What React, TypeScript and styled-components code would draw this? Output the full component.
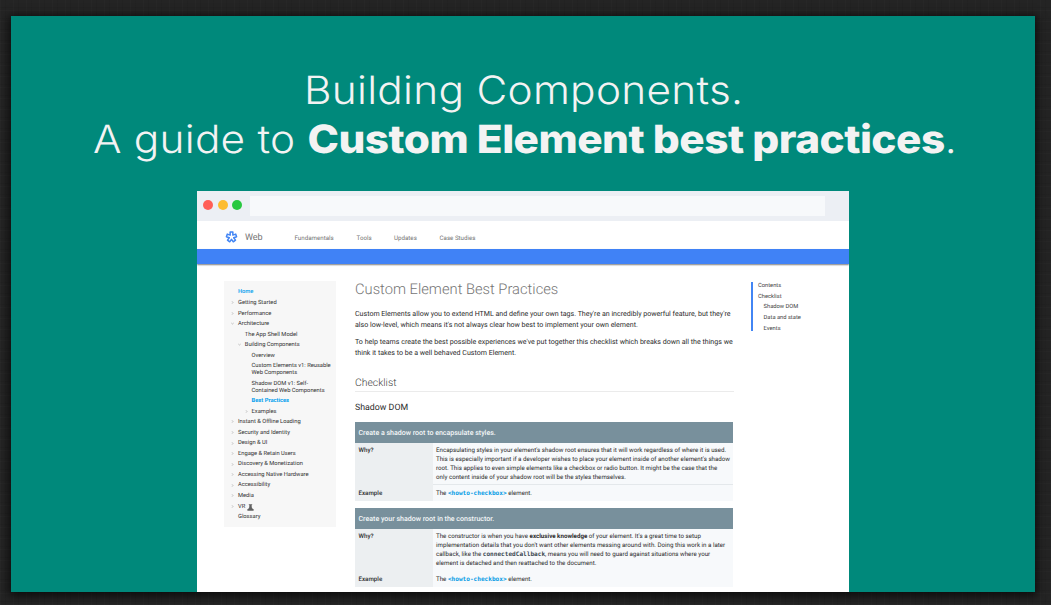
import React from 'react';
import styled, { createGlobalStyle } from 'styled-components';

const GlobalStyle = createGlobalStyle`
  * { box-sizing: border-box; }
  html, body { margin: 0; padding: 0; }
  body {
    width: 1051px;
    height: 605px;
    overflow: hidden;
    font-family: Roboto, "Liberation Sans", sans-serif;
    text-rendering: geometricPrecision;
    background: #222;
  }
`;

const Stage = styled.div`
  width: 1051px;
  height: 605px;
  padding: 16px 16px 13px 11px;
  overflow: hidden;
  background-color: #242424;
  background-image:
    repeating-linear-gradient(90deg, rgba(255, 255, 255, 0.015) 0 1px, transparent 1px 5px, rgba(0, 0, 0, 0.05) 5px 6px, transparent 6px 13px),
    repeating-linear-gradient(0deg, rgba(255, 255, 255, 0.015) 0 1px, transparent 1px 3px, rgba(0, 0, 0, 0.05) 3px 4px, transparent 4px 11px);
`;

const Slide = styled.main`
  width: 1024px;
  height: 576px;
  display: flex;
  flex-direction: column;
  overflow: hidden;
  background: #00897b;
  box-shadow: 0 2px 9px 2px rgba(0, 0, 0, 0.7);
`;

const Headline = styled.h1`
  margin: 0;
  height: 175px;
  flex: none;
  padding-top: 50px;
  display: flex;
  flex-direction: column;
  color: #f3f3f3;
  font-family: Inter, "Open Sans", sans-serif;
  font-size: 39px;
  font-weight: 275;
  line-height: 49px;
  white-space: pre;
`;

const HeadlineRow = styled.span<{ $left: number; $track: number }>`
  align-self: flex-start;
  margin-left: ${(p) => p.$left}px;
  letter-spacing: ${(p) => p.$track}px;
  transform: scaleX(1.085);
  transform-origin: left center;
`;

const Strong = styled.strong<{ $track: number }>`
  font-weight: 800;
  letter-spacing: ${(p) => p.$track}px;
`;

const Browser = styled.section`
  width: 652px;
  margin-left: 186px;
  flex: none;
  height: 401px;
  background: #fff;
  overflow: hidden;
`;

const Chrome = styled.div`
  height: 30px;
  display: flex;
  align-items: flex-start;
  padding: 5px 0 0 6px;
  background: #eceff4;
`;

const Dots = styled.div`
  display: flex;
  gap: 4.5px;
  padding-top: 4.2px;
  width: 47px;
`;

const Dot = styled.i<{ $color: string }>`
  width: 10px;
  height: 10px;
  border-radius: 50%;
  background: ${(p) => p.$color};
`;

const AddressBar = styled.div`
  width: 575px;
  height: 20px;
  background: #f7f9fb;
`;

const SiteNav = styled.nav`
  height: 27.5px;
  display: flex;
  align-items: center;
  padding: 6px 0 0 28px;
  color: #757575;
`;

const Logo = styled.svg`
  width: 13px;
  height: 13px;
  margin-right: 7px;
`;

const NavLabel = styled.span<{ $width: number; $size?: number }>`
  width: ${(p) => p.$width}px;
  font-size: ${(p) => p.$size ?? 6.2}px;
  white-space: nowrap;
`;

const Banner = styled.div`
  height: 15.5px;
  background: #4082f6;
  box-shadow: 0 1px 1.5px rgba(0, 0, 0, 0.5);
`;

const Columns = styled.div`
  display: grid;
  grid-template-columns: 112px 379px 90px;
  column-gap: 18.5px;
  align-items: start;
  padding: 17px 0 0 27px;
`;

const Tree = styled.ul`
  margin: 0;
  padding: 6.7px 0 3px;
  list-style: none;
  height: 245.5px;
  background: #f7f7f7;
  font-size: 5.75px;
  line-height: 7px;
  color: #303030;
`;

const TreeItem = styled.li<{ $level: number; $active?: boolean; $bold?: boolean }>`
  display: flex;
  padding: 1.78px 0 1.77px ${(p) => 7 + p.$level * 6.8}px;
  white-space: pre;
  color: ${(p) => (p.$active ? '#03a0ee' : 'inherit')};
  font-weight: ${(p) => (p.$bold ? 700 : p.$active ? 500 : 400)};
`;

const Marker = styled.span`
  width: 7px;
  padding-top: 1.2px;
  flex: none;
  line-height: 0;
`;

const Article = styled.article`
  padding-left: 0.5px;
  color: #2b2b2b;
`;

const Title = styled.h2`
  margin: 0 0 12px;
  font-size: 14.72px;
  font-weight: 300;
  line-height: 16px;
  color: #757575;
  white-space: nowrap;
`;

const Paragraph = styled.p`
  margin: 0 0 7.2px;
  font-size: 7.07px;
  line-height: 10.6px;
  white-space: nowrap;
`;

const SectionTitle = styled.h3`
  margin: 17.2px 0 10px;
  height: 16px;
  border-bottom: 1px solid #ebebeb;
  font-size: 10.4px;
  font-weight: 300;
  line-height: 14px;
  color: #424242;
`;

const SubTitle = styled.h4`
  margin: 0 0 6.8px;
  font-size: 8.8px;
  font-weight: 400;
  line-height: 13.4px;
`;

const Table = styled.section`
  width: 378px;
  margin-bottom: 7px;
  font-size: 6.19px;
  line-height: 8.85px;
`;

const TableHead = styled.div`
  height: 21px;
  padding: 0 3.5px;
  line-height: 21px;
  font-size: 7.04px;
  font-weight: 500;
  background: #78909c;
  color: #f4f7f8;
`;

const TableRow = styled.div<{ $height: number; $line?: boolean }>`
  display: grid;
  grid-template-columns: 77.5px 1fr;
  height: ${(p) => p.$height}px;
  border-bottom: ${(p) => (p.$line ? '1px solid #e4e8eb' : '0')};
  background: #f7f9fb;
`;

const Term = styled.div`
  padding: 3.5px;
  background: #eceff1;
  font-weight: 500;
`;

const Detail = styled.div`
  padding: 3.5px;
  white-space: nowrap;
`;

const Line = styled.div`
  white-space: nowrap;
`;

const Code = styled.code<{ $link?: boolean }>`
  font-family: "DejaVu Sans Mono", monospace;
  font-size: 6.1px;
  line-height: 1;
  font-weight: 700;
  color: ${(p) => (p.$link ? '#039be5' : '#37474f')};
`;

const Contents = styled.ul`
  margin: 1px 0 0 -1px;
  padding: 1.2px 0 0 5px;
  height: 49px;
  list-style: none;
  border-left: 2px solid #4285f4;
  font-size: 5.75px;
  line-height: 7px;
  color: #424242;
`;

const ContentsItem = styled.li<{ $nested?: boolean }>`
  height: 10.6px;
  padding-left: ${(p) => (p.$nested ? 5.6 : 0)}px;
  white-space: nowrap;
`;

type Entry = { text: string; level: number; mark?: 'closed' | 'open'; active?: boolean; bold?: boolean; beaker?: boolean };

const entries: Entry[] = [
  { text: 'Home', level: 0, active: true },
  { text: 'Getting Started', level: 0, mark: 'closed' },
  { text: 'Performance', level: 0, mark: 'closed' },
  { text: 'Architecture', level: 0, mark: 'open' },
  { text: 'The App Shell Model', level: 1 },
  { text: 'Building Components', level: 1, mark: 'open' },
  { text: 'Overview', level: 2 },
  { text: 'Custom Elements v1: Reusable\nWeb Components', level: 2 },
  { text: 'Shadow DOM v1: Self-\nContained Web Components', level: 2 },
  { text: 'Best Practices', level: 2, active: true, bold: true },
  { text: 'Examples', level: 2, mark: 'closed' },
  { text: 'Instant & Offline Loading', level: 0, mark: 'closed' },
  { text: 'Security and Identity', level: 0, mark: 'closed' },
  { text: 'Design & UI', level: 0, mark: 'closed' },
  { text: 'Engage & Retain Users', level: 0, mark: 'closed' },
  { text: 'Discovery & Monetization', level: 0, mark: 'closed' },
  { text: 'Accessing Native Hardware', level: 0, mark: 'closed' },
  { text: 'Accessibility', level: 0, mark: 'closed' },
  { text: 'Media', level: 0, mark: 'closed' },
  { text: 'VR ', level: 0, mark: 'closed', beaker: true },
  { text: 'Glossary', level: 0 },
];

const Chevron = ({ open }: { open: boolean }) => (
  <svg width="3" height="3" viewBox="0 0 3 3" fill="none" stroke="#9e9e9e" strokeWidth=".6">
    <path d={open ? 'M.3 1 1.5 2 2.7 1' : 'M1 .3 2 1.5 1 2.7'} />
  </svg>
);

const Beaker = () => (
  <svg width="7" height="7" viewBox="0 0 7 7" fill="#616161">
    <path d="M1.8.3h3.4v.8h-.5v2.2L5.8 5h.8v1.7H.4V5h.8l1.1-1.7V1.1h-.5z" />
  </svg>
);

const App = () => (
  <Stage>
    <GlobalStyle />
    <Slide>
      <Headline>
        <HeadlineRow $left={293} $track={0.27}>Building Components.</HeadlineRow>
        <HeadlineRow $left={82} $track={0.22}>
          A guide to <Strong $track={-0.48}>Custom Element best practices</Strong>.
        </HeadlineRow>
      </Headline>
      <Browser>
        <Chrome>
          <Dots>
            <Dot $color="#ff5f57" />
            <Dot $color="#fdbc2e" />
            <Dot $color="#28c840" />
          </Dots>
          <AddressBar />
        </Chrome>
        <SiteNav>
          <Logo viewBox="0 0 24 24" fill="none" stroke="#4285f4" strokeWidth="2.8" strokeLinejoin="round">
            <path d="M9.5 2h5v5.6l5.3-1.8 1.6 4.8-5.3 1.8 3.3 4.5-4.1 3-3.3-4.5-3.3 4.5-4.1-3 3.3-4.5-5.3-1.8 1.6-4.8 5.3 1.8z" />
          </Logo>
          <NavLabel $width={49.5} $size={9}>Web</NavLabel>
          <NavLabel $width={62}>Fundamentals</NavLabel>
          <NavLabel $width={37.5}>Tools</NavLabel>
          <NavLabel $width={45.5}>Updates</NavLabel>
          <NavLabel $width={50}>Case Studies</NavLabel>
        </SiteNav>
        <Banner />
        <Columns>
          <Tree>
            {entries.map((e) => (
              <TreeItem key={e.text} $level={e.level} $active={e.active} $bold={e.bold}>
                <Marker>{e.mark && <Chevron open={e.mark === 'open'} />}</Marker>
                {e.text}
                {e.beaker && <Beaker />}
              </TreeItem>
            ))}
          </Tree>
          <Article>
            <Title>Custom Element Best Practices</Title>
            <Paragraph>
              Custom Elements allow you to extend HTML and define your own tags. They're an incredibly powerful feature, but they're
              <br />
              also low-level, which means it's not always clear how best to implement your own element.
            </Paragraph>
            <Paragraph>
              To help teams create the best possible experiences we've put together this checklist which breaks down all the things we
              <br />
              think it takes to be a well behaved Custom Element.
            </Paragraph>
            <SectionTitle>Checklist</SectionTitle>
            <SubTitle>Shadow DOM</SubTitle>
            <Table>
              <TableHead>Create a shadow root to encapsulate styles.</TableHead>
              <TableRow $height={42.5} $line>
                <Term>Why?</Term>
                <Detail>
                  <Line>Encapsulating styles in your element's shadow root ensures that it will work regardless of where it is used.</Line>
                  <Line>This is especially important if a developer wishes to place your element inside of another element's shadow</Line>
                  <Line>root. This applies to even simple elements like a checkbox or radio button. It might be the case that the</Line>
                  <Line>only content inside of your shadow root will be the styles themselves.</Line>
                </Detail>
              </TableRow>
              <TableRow $height={15.5}>
                <Term>Example</Term>
                <Detail>The <Code $link>{'<howto-checkbox>'}</Code> element.</Detail>
              </TableRow>
            </Table>
            <Table>
              <TableHead>Create your shadow root in the constructor.</TableHead>
              <TableRow $height={42.5}>
                <Term>Why?</Term>
                <Detail>
                  <Line>The constructor is when you have <b>exclusive knowledge</b> of your element. It's a great time to setup</Line>
                  <Line>implementation details that you don't want other elements messing around with. Doing this work in a later</Line>
                  <Line>callback, like the <Code>connectedCallback</Code>, means you will need to guard against situations where your</Line>
                  <Line>element is detached and then reattached to the document.</Line>
                </Detail>
              </TableRow>
              <TableRow $height={15.5}>
                <Term>Example</Term>
                <Detail>The <Code $link>{'<howto-checkbox>'}</Code> element.</Detail>
              </TableRow>
            </Table>
          </Article>
          <Contents>
            <ContentsItem>Contents</ContentsItem>
            <ContentsItem>Checklist</ContentsItem>
            <ContentsItem $nested>Shadow DOM</ContentsItem>
            <ContentsItem $nested>Data and state</ContentsItem>
            <ContentsItem $nested>Events</ContentsItem>
          </Contents>
        </Columns>
      </Browser>
    </Slide>
  </Stage>
);

export default App;
